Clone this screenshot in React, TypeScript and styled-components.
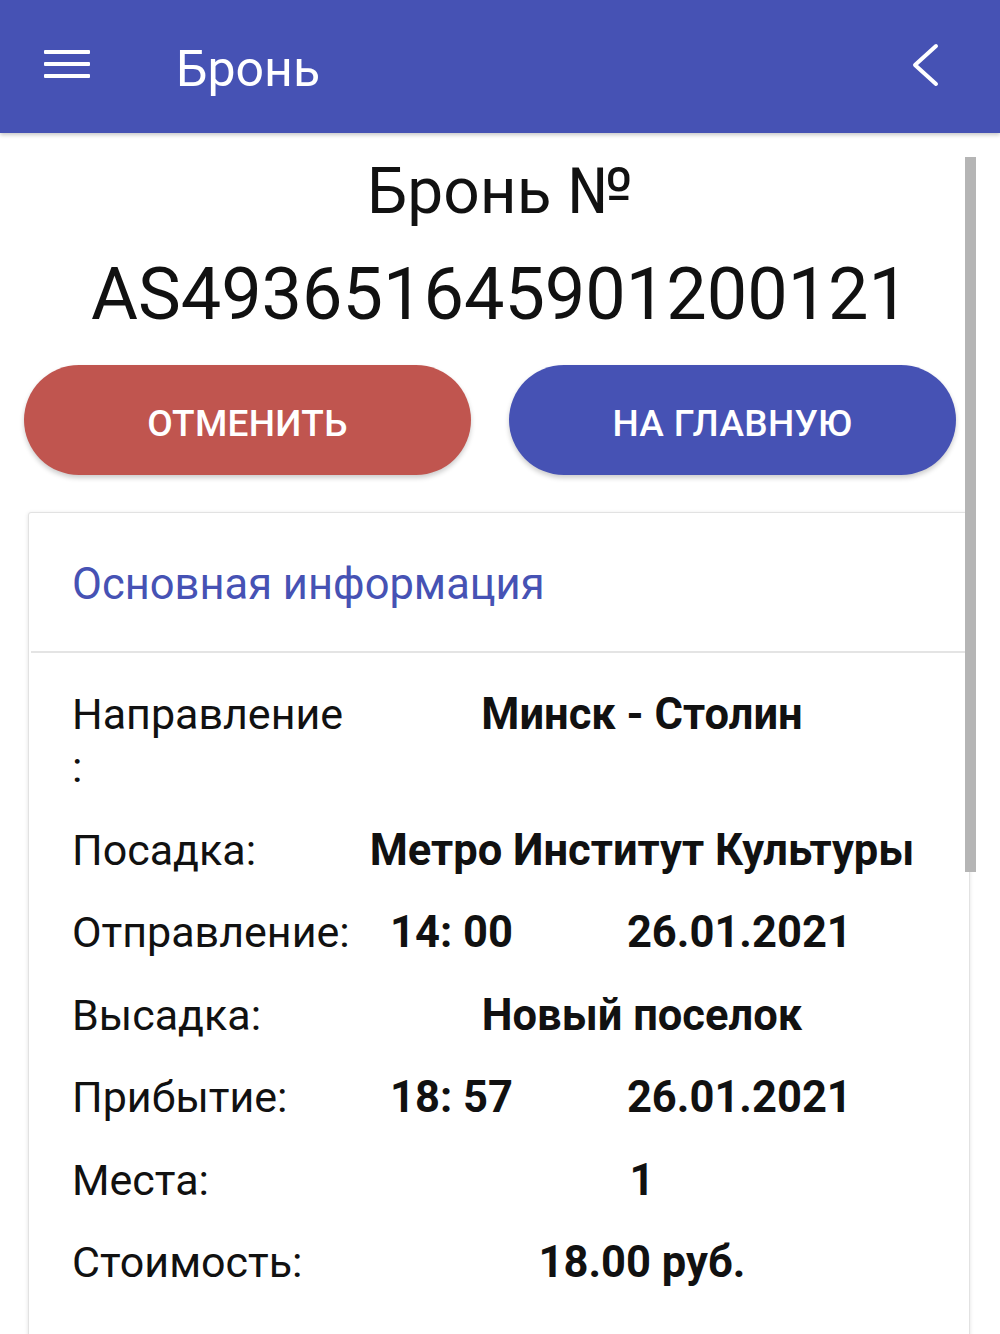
import React from "react";
import styled, { createGlobalStyle } from "styled-components";

const Global = createGlobalStyle`
  html, body { margin: 0; padding: 0; background: #ffffff; }
  body { font-family: Roboto, "Noto Sans", "Liberation Sans", sans-serif; color: #111; }
`;

const Page = styled.div`
  width: 1000px;
  position: relative;
`;

const TopBar = styled.header`
  height: 133px;
  background: #4652b4;
  display: flex;
  align-items: center;
  padding: 0 0 0 44px;
  box-sizing: border-box;
  box-shadow: 0 2px 4px rgba(0, 0, 0, 0.22);
  position: relative;
  z-index: 2;
`;

const MenuButton = styled.div`
  width: 46px;
  height: 30px;
  display: flex;
  margin-top: -6px;
`;

const BarTitle = styled.h1`
  margin: 0 0 0 86px;
  font-size: 50px;
  font-weight: 400;
  color: #ffffff;
  flex: 1;
  line-height: 1;
  margin-top: 4px;
`;

const BackButton = styled.div`
  width: 32px;
  height: 44px;
  margin-right: 58px;
  margin-top: -4px;
  display: flex;
`;

const TitleBlock = styled.div`
  display: flex;
  flex-direction: column;
  align-items: center;
  padding-top: 19px;
`;

const TitleLine = styled.div`
  font-size: 64px;
  line-height: 80px;
  font-weight: 400;
  color: #111;
`;

const NumberLine = styled.div`
  font-size: 72px;
  line-height: 90px;
  font-weight: 400;
  color: #111;
  margin-top: 18px;
`;

const Actions = styled.div`
  display: grid;
  grid-template-columns: 447px 447px;
  gap: 38px;
  padding: 25px 0 0 24px;
`;

const PillButton = styled.button<{ $tone: "danger" | "primary" }>`
  height: 110px;
  border: none;
  border-radius: 55px;
  background: ${(p) => (p.$tone === "danger" ? "#c0554f" : "#4652b4")};
  color: #ffffff;
  font-family: Roboto, "Noto Sans", sans-serif;
  font-size: 37px;
  font-weight: 500;
  letter-spacing: 0.3px;
  box-shadow: 0 3px 5px rgba(0, 0, 0, 0.2);
  padding: 6px 0 0 0;
`;

const Card = styled.section`
  margin: 37px 30px 0 28px;
  border: 1px solid #e2e2e2;
  border-radius: 3px;
  box-shadow: 0 1px 4px rgba(0, 0, 0, 0.12);
  background: #fff;
  padding-bottom: 140px;
`;

const CardHeader = styled.div`
  height: 140px;
  display: flex;
  align-items: center;
  padding-left: 41px;
  border-bottom: 2px solid #e4e4e4;
  margin: 0 2px;
  box-sizing: border-box;
`;

const CardTitle = styled.h2`
  margin: 0;
  font-size: 43.5px;
  font-weight: 400;
  color: #4652b4;
  margin-top: 4px;
`;

const InfoList = styled.div`
  display: grid;
  grid-template-columns: 283px 544px;
  column-gap: 15px;
  row-gap: 29.5px;
  padding: 35px 0 0 43px;
  align-items: start;
`;

const Label = styled.div`
  font-size: 43px;
  line-height: 53px;
  color: #111;
  white-space: nowrap;
`;

const Value = styled.div<{ $align?: "center" | "split" }>`
  font-size: 43.5px;
  line-height: 53px;
  font-weight: 700;
  color: #111;
  white-space: nowrap;
  display: flex;
  justify-content: ${(p) => (p.$align === "split" ? "flex-start" : "center")};
  padding-left: ${(p) => (p.$align === "split" ? "20px" : "0")};
  gap: 114px;
`;

const Scrollbar = styled.div`
  position: absolute;
  left: 965px;
  top: 157px;
  width: 11px;
  height: 715px;
  background: #b5b5b5;
  z-index: 3;
`;

export default function App() {
  return (
    <Page>
      <Global />
      <TopBar>
        <MenuButton>
          <svg width="46" height="30" viewBox="0 0 46 30">
            <rect x="0" y="1" width="46" height="4" rx="1" fill="#fff" />
            <rect x="0" y="13" width="46" height="4" rx="1" fill="#fff" />
            <rect x="0" y="25" width="46" height="4" rx="1" fill="#fff" />
          </svg>
        </MenuButton>
        <BarTitle>Бронь</BarTitle>
        <BackButton>
          <svg width="32" height="44" viewBox="0 0 32 44">
            <path d="M26 3 L5 22 L26 41" stroke="#fff" strokeWidth="4" fill="none" strokeLinecap="round" strokeLinejoin="round" />
          </svg>
        </BackButton>
      </TopBar>
      <Scrollbar />
      <TitleBlock>
        <TitleLine>Бронь №</TitleLine>
        <NumberLine>AS493651645901200121</NumberLine>
      </TitleBlock>
      <Actions>
        <PillButton $tone="danger">ОТМЕНИТЬ</PillButton>
        <PillButton $tone="primary">НА ГЛАВНУЮ</PillButton>
      </Actions>
      <Card>
        <CardHeader>
          <CardTitle>Основная информация</CardTitle>
        </CardHeader>
        <InfoList>
          <Label>
            Направление
            <br />:
          </Label>
          <Value>Минск - Столин</Value>
          <Label>Посадка:</Label>
          <Value>Метро Институт Культуры</Value>
          <Label>Отправление:</Label>
          <Value $align="split">
            <span>14: 00</span>
            <span>26.01.2021</span>
          </Value>
          <Label>Высадка:</Label>
          <Value>Новый поселок</Value>
          <Label>Прибытие:</Label>
          <Value $align="split">
            <span>18: 57</span>
            <span>26.01.2021</span>
          </Value>
          <Label>Места:</Label>
          <Value>1</Value>
          <Label>Стоимость:</Label>
          <Value>18.00 руб.</Value>
        </InfoList>
      </Card>
    </Page>
  );
}
